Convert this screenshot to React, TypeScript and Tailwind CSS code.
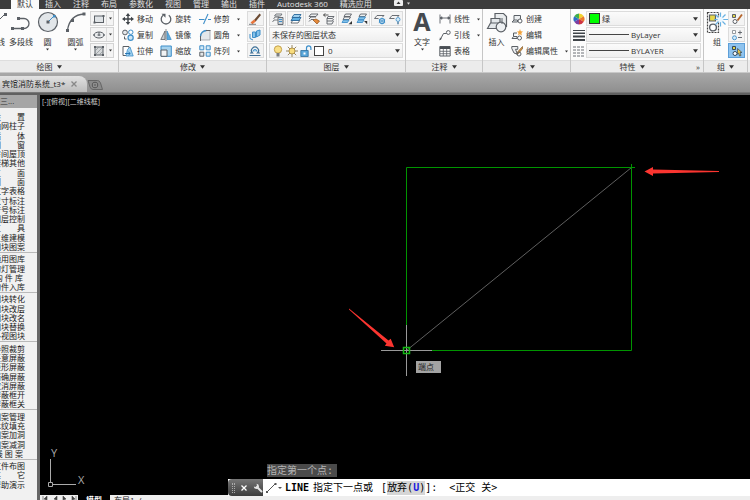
import React from 'react';
import clsx from 'clsx';

const tabs = ['默认', '插入', '注释', '布局', '参数化', '视图', '管理', '输出', '插件', 'Autodesk 360', '精选应用'];

const menuGroups = [
  ['设　　置', '轴网柱子', '墙　　体', '门　　窗', '房间屋顶', '楼梯其他', '立　　面', '剖　　面', '文字表格', '尺寸标注', '符号标注', '图层控制', '工　　具', '三维建模', '图块图案'],
  ['通用图库', '幻灯管理', '构 件 库 ', '构件入库'],
  ['图块转化', '图块改层', '图块改名', '图块替换', '多视图块'],
  ['参照裁剪', '任意屏蔽', '矩形屏蔽', '精确屏蔽', '取消屏蔽', '屏蔽框开', '屏蔽框关'],
  ['图案管理', '木纹填充', '图案加洞', '图案减洞', '线 图 案 '],
  ['文件布图', '其　　它', '帮助演示'],
];

const G = '#5b6066';
const B = '#3f8fc9';

// 12x12 icons of the ribbon
const icons: Record<string, React.ReactNode> = {
  rect: (
    <>
      <rect x="1.5" y="3" width="9" height="6.5" fill="#dfe3e6" stroke={G} />
      <path d="M0.5 8.5h2v2h-2zM9.5 2h2v2h-2z" fill={G} />
    </>
  ),
  ellipse: (
    <>
      <ellipse cx="6" cy="6" rx="5" ry="3" fill="#e8eaec" stroke={G} />
      <path d="M6 3v4M4.5 6h3M0 6h2M10 6h2" stroke={G} />
    </>
  ),
  hatch: (
    <>
      <rect x="2" y="2" width="8" height="8" fill="#d5d8da" stroke={G} />
      <path d="M2 6l4-4M2 10l8-8M6 10l4-4" stroke="#8b9094" strokeWidth=".7" />
      <path d="M1 1h2v2H1zM9 1h2v2H9zM1 9h2v2H1zM9 9h2v2H9z" fill={G} />
    </>
  ),
  move: <path d="M6 0l2.3 3H6.7v2.3H9V3.8L12 6 9 8.2V6.7H6.7V9h1.6L6 12 3.7 9h1.6V6.7H3v1.5L0 6l3-2.2v1.5h2.3V3H3.7z" fill="#3f4449" />,
  rotate: (
    <>
      <path d="M3.2 2.3a4.8 4.8 0 1 0 5.6 0" fill="none" stroke={G} strokeWidth="1.3" />
      <path d="M1.5.8h4v4z" fill={G} />
    </>
  ),
  trim: (
    <>
      <path d="M0 6.5h5.5M9 6.5h3" stroke={B} strokeWidth="1.2" />
      <path d="M4.5 11L9 1" stroke={B} strokeWidth="1.1" />
    </>
  ),
  copy: (
    <>
      <circle cx="3" cy="3.5" r="2.4" fill="#e4e7ea" stroke={G} />
      <circle cx="8.8" cy="3.2" r="2.2" fill="#fff" stroke={B} />
      <circle cx="8.6" cy="8.8" r="2.6" fill="#cfe6f5" stroke={B} strokeWidth="1.2" />
      <path d="M2.5 7.5v2.5h2" fill="none" stroke={G} />
    </>
  ),
  mirror: (
    <>
      <path d="M5 2v8.5H.8z" fill="#c9cdd1" stroke={G} strokeWidth=".8" />
      <path d="M7 2v8.5h4.2z" fill="#5caadd" stroke={B} strokeWidth=".8" />
      <path d="M6 0v12" stroke={G} strokeWidth=".7" />
    </>
  ),
  fillet: (
    <>
      <path d="M1.5 11V7.5a6 6 0 0 1 6-6H11V11z" fill="#e3e7ea" stroke="#9aa0a5" strokeWidth=".8" />
      <path d="M1.5 7.5a6 6 0 0 1 6-6" fill="none" stroke={B} strokeWidth="1.4" />
      <path d="M1.5 7v5M7 1.5h4.5" stroke={G} />
    </>
  ),
  stretch: (
    <>
      <path d="M1 1.5h6v9H1z" fill="#fff" stroke={G} />
      <path d="M5.5 4.5L8 2l3.2 9H4z" fill="#9fd0ee" stroke={B} strokeWidth=".8" />
      <path d="M3 8.5h5M6.5 7l1.8 1.5L6.5 10" fill="none" stroke="#1e6fb0" strokeWidth=".9" />
    </>
  ),
  scale: (
    <>
      <path d="M1 1h10.3v10.3H1z" fill="#a7d3ee" stroke={B} />
      <path d="M1 5h6v6.3H1z" fill="#f1f3f4" stroke={G} />
    </>
  ),
  array: (
    <>
      <path d="M.8.8h4v4h-4zM7.200.8h4v4h-4z" fill="#d6eaf7" stroke={B} />
      <path d="M.8 7.200h4v4h-4z" fill="#e4e7ea" stroke={G} />
      <path d="M7.200 7.200h4v4h-4z" fill="#d6eaf7" stroke={B} />
    </>
  ),
  erase: (
    <>
      <path d="M10.5 0.5L5 7l1.7 1.4L12 2z" fill="#6b4a32" />
      <path d="M5 6.5L1.5 9.5l2 1.7L7 8.2z" fill="#e9763d" />
      <path d="M0 11.3h7" stroke={G} strokeWidth=".8" />
    </>
  ),
  explode: (
    <>
      <path d="M3.5 3h3v5.500h-3zM7.500 2l3.500-1v5l-3.500 2z" fill="#86c1e8" stroke={B} />
      <path d="M1 5v4.500l3 1.500" fill="none" stroke={B} />
    </>
  ),
  offset: (
    <>
      <path d="M.5 10.500h11M1 8h2.500a3.500 3.500 0 1 1 5 0H11" fill="none" stroke="#3d6f96" strokeWidth="1.2" />
      <path d="M4 6.500a2 2 0 1 1 4 0" fill="#9fd0ee" stroke={B} />
    </>
  ),
  layerProps: (
    <>
      <path d="M2.500 3l1.500-2h6L8.500 3zM1.500 6L3 4h4M.5 9L2 7h4" fill="#eef0f1" stroke={G} strokeWidth=".8" />
      <path d="M6 4.500h5v7H6z" fill="#cfd6dc" stroke={G} strokeWidth=".9" />
      <path d="M7 6.500h3M7 8.500h3" stroke={B} />
    </>
  ),
  layerStack: (
    <>
      <path d="M1 10l2-3h7l-2 3z" fill="#fff" stroke={G} strokeWidth=".9" />
      <path d="M1 7.500l2-3h8l-2 3z" fill="#5fb0e3" stroke="#27679a" strokeWidth=".9" />
      <path d="M2 4.500l2-3h7l-2 3z" fill="#9fd0ee" stroke="#27679a" strokeWidth=".9" />
    </>
  ),
  layerMatch: (
    <>
      <path d="M1 3.500l2-2.500h7L8 3.500zM1 6l2-2h5M1 8.500l2-2h3" fill="#eef0f1" stroke={G} strokeWidth=".9" />
      <path d="M5 7l4 4 2.500-3L8 6z" fill="#e58a3a" stroke="#8c4d1a" strokeWidth=".7" />
    </>
  ),
  layerPrev: (
    <>
      <path d="M5 3.500h6L9.500 5.500H4zM4 8h5.500l1-2M4 5.500v5.500h5l1.500-3" fill="#eef0f1" stroke={G} strokeWidth=".9" />
      <path d="M.5 2h5M2.500.3l-2 1.700 2 1.700" fill="none" stroke="#444" strokeWidth=".9" />
    </>
  ),
  layerDown: (
    <>
      <path d="M3 3.500l1.500-2.500h6L9 3.500zM2 6.500L3.500 4h6L8 6.500z" fill="#eef0f1" stroke={G} strokeWidth=".9" />
      <path d="M1 9.500L2.500 7H8L6.500 9.500z" fill="#84c1e8" stroke={B} strokeWidth=".9" />
      <path d="M11 8v3.200H7.500z" fill="#333" />
    </>
  ),
  layerUp: (
    <>
      <path d="M3 3.500l1.500-2.500h6L9 3.500z" fill="#eef0f1" stroke={G} strokeWidth=".9" />
      <path d="M2 6.500L3.500 4h6L8 6.500zM1 9.500L2.500 7H8L6.500 9.500z" fill="#84c1e8" stroke={B} strokeWidth=".9" />
      <path d="M8 8h3.200v3.200z" fill="#333" />
    </>
  ),
  layerFreeze: (
    <>
      <path d="M.5 5.500L3 2.500h7L8.500 4M.5 5.500h4" fill="none" stroke={G} strokeWidth=".9" />
      <circle cx="8" cy="8" r="2.500" fill="#fff" stroke={B} strokeWidth="1.200" />
      <path d="M8 4.500v7M4.800 6.300l6.400 3.400M4.800 9.700l6.400-3.400" stroke={B} strokeWidth=".7" />
    </>
  ),
  layerOff: (
    <>
      <path d="M.5 5.500L3 2.500h7L8.500 4M.5 5.500h5" fill="none" stroke={G} strokeWidth=".9" />
      <circle cx="9" cy="6.500" r="2" fill="#d6ecfa" stroke={B} strokeWidth=".8" />
      <path d="M8.200 8.800h1.600v2.400H8.200z" fill="#5a86a8" />
    </>
  ),
  linear: <path d="M1 1.500v9M11 1.500v9M1 5h10M1 5l2-1.200v2.400zM11 5l-2-1.200v2.400z" fill={G} stroke={G} strokeWidth=".9" />,
  leader: (
    <>
      <path d="M1 11l3.500-6.500h3" fill="none" stroke={G} />
      <path d="M.5 11.500l.4-3 2 1.200z" fill={G} />
      <circle cx="9.300" cy="3.500" r="1.900" fill="#fff" stroke={G} />
    </>
  ),
  table: (
    <>
      <path d="M.8 1.500h10.400v9.500H.8z" fill="#fff" stroke={G} />
      <path d="M1 1.500h10v2.500H1z" fill="#4a4f55" />
      <path d="M1 6.300h10M1 8.700h10M4.300 4v7M7.700 4v7" stroke={G} strokeWidth=".8" />
    </>
  ),
  create: (
    <>
      <path d="M3 7V2.500h6.500V6M1 9l2-2h3.500v2z" fill="#edf0f2" stroke={G} />
      <circle cx="9" cy="8" r="2" fill="#fff" stroke={G} />
    </>
  ),
  edit: (
    <>
      <path d="M2.500 7.500V4H6M1 9.500l1.500-2H6v2z" fill="#edf0f2" stroke={G} />
      <circle cx="8.500" cy="9" r="2" fill="#fff" stroke={G} />
      <path d="M9 0l.8 2.200 2.200.3-1.600 1.500.4 2.400L9 5.200 7 6.300l.5-2.200L6 2.600l2.200-.3z" fill="#f2a33c" />
    </>
  ),
  editAttr: (
    <>
      <path d="M.8 1.500h6v2.800H4.500l2 5L3 8 .8 3.500z" fill="#eceef0" stroke={G} />
      <path d="M11.500 1.500L6.500 7l-.7 2 2-.7L12 3z" fill="#d99a45" stroke="#674420" strokeWidth=".6" />
      <circle cx="8" cy="9" r="2" fill="none" stroke={G} />
    </>
  ),
  colors: (
    <>
      <path d="M6 6V.5A5.500 5.500 0 0 1 10.800 3.300z" fill="#f2d32f" />
      <path d="M6 6l4.800-2.700a5.500 5.500 0 0 1 0 5.500z" fill="#e97b2c" />
      <path d="M6 6l4.800 2.800A5.500 5.500 0 0 1 6 11.500z" fill="#cf3341" />
      <path d="M6 6v5.500A5.500 5.500 0 0 1 1.200 8.800z" fill="#7c3fa0" />
      <path d="M6 6L1.200 8.800a5.500 5.500 0 0 1 0-5.500z" fill="#2e6fc4" />
      <path d="M6 6L1.200 3.300A5.500 5.500 0 0 1 6 .5z" fill="#3fae4c" />
    </>
  ),
  weights: <path d="M0 1h12v1H0zM0 3.500h12V5H0zM0 6.500h12v2H0zM0 10h12v2H0z" fill="#3f4449" />,
  dashes: <path d="M0 2h12M0 5h12M0 8h12M0 11h12" stroke={G} strokeDasharray="3 1" strokeWidth=".9" />,
  ungroup: (
    <>
      <path d="M1.500 1.500h3v3h-3z" fill="#e3d44a" stroke={G} />
      <circle cx="4" cy="8.500" r="2" fill="#fff" stroke={G} />
      <path d="M11 1.500L6.500 7.500" stroke="#b5652c" strokeWidth="1.800" />
    </>
  ),
  groupEdit: (
    <>
      <path d="M1.500 1.500h3v3h-3z" fill="#fff" stroke="#8b9094" strokeWidth=".9" />
      <circle cx="3.500" cy="8.800" r="2" fill="#d6eaf7" stroke={B} strokeWidth=".9" />
      <path d="M7 3.500h4M9 1.500v4M7 8.500h4" stroke={G} strokeWidth=".9" />
    </>
  ),
  groupSelect: (
    <>
      <path d="M1.500 1.500h3v3h-3z" fill="#e3d44a" stroke="#34495c" />
      <circle cx="4" cy="8.500" r="2" fill="#fff" stroke="#34495c" />
      <path d="M6.500 3.500l4.500 4H9l1 3-1.500.5-.8-2.800-1.200 1z" fill="#e9c64a" stroke="#34495c" strokeWidth=".7" />
    </>
  ),
  bulb: (
    <>
      <circle cx="6" cy="4.500" r="3.700" fill="#f9df86" stroke="#b58f3a" strokeWidth=".8" />
      <path d="M4.500 8h3v3.500h-3z" fill="#7a7d80" />
    </>
  ),
  sun: (
    <>
      <path d="M6 0v12M0 6h12M1.800 1.800l8.400 8.400M10.200 1.800l-8.400 8.400" stroke="#8d7b4e" strokeWidth=".9" />
      <circle cx="6" cy="6" r="3" fill="#f8dc7d" stroke="#a5853a" strokeWidth=".8" />
    </>
  ),
  unlock: (
    <>
      <path d="M6.500 6V3a2.200 2.200 0 0 1 4.400 0v2" fill="none" stroke={B} strokeWidth="1.200" />
      <path d="M.8 5.500h7.400v6H.8z" fill="#5aa7da" stroke="#2d6d9c" strokeWidth=".8" />
      <path d="M3.500 7.500h2v2h-2z" fill="#fff" />
    </>
  ),
};

const Icon = ({ name }: { name: string }) => (
  <svg viewBox="0 0 12 12" className="size-3 shrink-0">{icons[name]}</svg>
);

const Caret = ({ big }: { big?: boolean }) => (
  <svg viewBox="0 0 6 4" className={clsx('shrink-0', big ? 'w-[5px] h-[4px]' : 'w-[3px] h-[3px]')}>
    <path d="M0 0h6L3 4z" fill="#333" />
  </svg>
);

const Panel = ({ title, className, launcher, children }: { title: string; className: string; launcher?: boolean; children: React.ReactNode }) => (
  <section className={clsx('shrink-0 flex flex-col border-r border-[#c6c6c6]', className)}>
    <div className="h-[52px] flex items-start px-0.5 pt-0.5">{children}</div>
    <div className="h-3 flex items-center bg-[#ececec] border-t border-[#dedede]">
      <button className="flex-1 flex items-center justify-center gap-1">
        <span>{title}</span>
        <Caret big />
      </button>
      {launcher && <button aria-label="特性选项板" className="w-2.5">»</button>}
    </div>
  </section>
);

const Tool = ({ icon, label, caret }: { icon: string; label: string; caret?: boolean }) => (
  <button className="h-4 flex items-center gap-[3px] whitespace-nowrap">
    <Icon name={icon} />
    <span>{label}</span>
    {caret && <span className="pl-1"><Caret /></span>}
  </button>
);

const BigTool = ({ label, caret, className, children }: { label: string; caret?: boolean; className: string; children: React.ReactNode }) => (
  <button className={clsx('flex flex-col items-center shrink-0 whitespace-nowrap', className)}>
    <svg viewBox="0 0 22 22" className="size-[22px] mb-1">{children}</svg>
    <span className="leading-[10px]">{label}</span>
    {caret && <span className="pt-px"><Caret /></span>}
  </button>
);

const IconBox = ({ names, active }: { names: string[]; active?: boolean }) => (
  <div className={clsx('h-[15px] flex items-center border', active ? 'bg-[#8fc3ee] border-[#5d9fd8]' : 'bg-[#f4f4f4] border-[#dcdcdc]')}>
    {names.map((n) => (
      <button key={n} aria-label={n} className="w-[15px] h-full flex items-center justify-center"><Icon name={n} /></button>
    ))}
  </div>
);

const SplitBox = ({ name }: { name: string }) => (
  <div className="h-[15px] flex border border-[#d4d4d4] bg-[#f4f4f4]">
    <button aria-label={name} className="w-[15px] flex items-center justify-center"><Icon name={name} /></button>
    <button aria-label={name + ' 选项'} className="w-[7px] flex items-center justify-center border-l border-[#dcdcdc]"><Caret /></button>
  </div>
);

const Combo = ({ label, value, children }: { label: string; value: string; children?: React.ReactNode }) => (
  <div className="h-[15px] flex-1 min-w-0 flex items-center gap-0.5 px-0.5 border border-[#dcdcdc] bg-linear-to-b from-[#fbfbfb] to-[#efefef]">
    {children}
    <select aria-label={label} className="appearance-none bg-transparent flex-1 min-w-0 h-3 leading-3 outline-none">
      <option>{value}</option>
    </select>
    <Caret big />
  </div>
);

const Ribbon = () => (
  <div className="flex h-16 shrink-0 bg-[#fcfcfc] overflow-hidden border-b border-[#c8c8c8]">
    <Panel title="绘图" className="w-[139px] -ml-5">
      <div className="flex flex-1 min-w-0 justify-end">
        <BigTool label="直线" className="w-[22px]">
          <path d="M4 18L19 3" stroke={G} />
          <path d="M18 2h3v3h-3z" fill={G} />
        </BigTool>
        <BigTool label="多段线" className="w-[26px]">
          <path d="M2 17.500h12a4.500 4.500 0 0 0 0-10H8" fill="none" stroke={G} strokeWidth="1.300" />
          <path d="M1 16h3v3H1zM11 16h3v3h-3zM7 6h3v3H7z" fill={G} />
        </BigTool>
        <BigTool label="圆" caret className="w-[27px]">
          <circle cx="11" cy="11" r="9.500" fill="#e2e6e9" stroke={G} strokeWidth="1.200" />
          <path d="M11 11l6-6" stroke={B} />
          <path d="M9.500 9.500h3v3h-3z" fill={G} />
          <path d="M16 4h2.500v2.500H16z" fill={B} />
        </BigTool>
        <BigTool label="圆弧" caret className="w-[29px]">
          <path d="M2.500 19C4 10 9 3.500 19 3" fill="none" stroke={G} strokeWidth="1.300" />
          <path d="M1 18h3v3H1zM6 8h3v3H6zM17.500 1.500h3v3h-3z" fill={G} />
        </BigTool>
        <div className="flex flex-col gap-px pr-0.5">
          <SplitBox name="rect" />
          <SplitBox name="ellipse" />
          <SplitBox name="hatch" />
        </div>
      </div>
    </Panel>

    <Panel title="修改" className="w-[148px]">
      <div className="flex flex-1 justify-between pl-px">
        <div>
          <Tool icon="move" label="移动" />
          <Tool icon="copy" label="复制" />
          <Tool icon="stretch" label="拉伸" />
        </div>
        <div>
          <Tool icon="rotate" label="旋转" />
          <Tool icon="mirror" label="镜像" />
          <Tool icon="scale" label="缩放" />
        </div>
        <div>
          <Tool icon="trim" label="修剪" caret />
          <Tool icon="fillet" label="圆角" caret />
          <Tool icon="array" label="阵列" caret />
        </div>
        <div className="flex flex-col gap-px">
          <IconBox names={['erase']} />
          <IconBox names={['explode']} />
          <IconBox names={['offset']} />
        </div>
      </div>
    </Panel>

    <Panel title="图层" className="w-[139px]">
      <div className="flex-1 min-w-0 flex flex-col gap-px">
        <div className="flex justify-between">
          <IconBox names={['layerProps']} />
          <IconBox names={['layerStack']} />
          <IconBox names={['layerMatch', 'layerPrev']} />
          <IconBox names={['layerDown', 'layerUp']} />
          <IconBox names={['layerFreeze', 'layerOff']} />
        </div>
        <div className="flex"><Combo label="图层状态" value="未保存的图层状态" /></div>
        <div className="flex">
          <Combo label="图层" value="0">
            <Icon name="bulb" />
            <Icon name="sun" />
            <Icon name="unlock" />
            <span className="size-2.5 mr-0.5 shrink-0 border border-[#444] bg-white" />
          </Combo>
        </div>
      </div>
    </Panel>

    <Panel title="注释" className="w-[77px]">
      <BigTool label="文字" caret className="w-[28px]">
        <text x="11" y="20" textAnchor="middle" fontSize="25" fontWeight="bold" fontFamily="Noto Sans, sans-serif" fill="#454a50">A</text>
      </BigTool>
      <div className="pl-[3px]">
        <Tool icon="linear" label="线性" caret />
        <Tool icon="leader" label="引线" caret />
        <Tool icon="table" label="表格" />
      </div>
    </Panel>

    <Panel title="块" className="w-[88px]">
      <BigTool label="插入" className="w-[23px]">
        <path d="M9 8V2.500h8.500l3 3V16" fill="#e8ebed" stroke={G} strokeWidth="1.200" />
        <path d="M5 12V7.500h9V12M1.500 17.500l3-5.500H14v5.500z" fill="#e3e7ea" stroke={G} strokeWidth="1.200" />
        <circle cx="15" cy="16" r="4.800" fill="#edf0f2" stroke={G} strokeWidth="1.200" />
        <path d="M16 7v6" stroke={G} />
      </BigTool>
      <div className="pl-[3px]">
        <Tool icon="create" label="创建" />
        <Tool icon="edit" label="编辑" />
        <Tool icon="editAttr" label="编辑属性" caret />
      </div>
    </Panel>

    <Panel title="特性" launcher className="w-[133px]">
      <div className="flex-1 min-w-0 flex flex-col gap-px">
        <div className="flex items-center gap-px">
          <Icon name="colors" />
          <Combo label="对象颜色" value="绿"><span className="size-[11px] shrink-0 bg-[#00ff00] border border-[#333]" /></Combo>
        </div>
        <div className="flex items-center gap-px">
          <Icon name="weights" />
          <Combo label="线宽" value="ByLayer"><span className="w-10 shrink-0 border-t border-[#444]" /></Combo>
        </div>
        <div className="flex items-center gap-px">
          <Icon name="dashes" />
          <Combo label="线型" value="BYLAYER"><span className="w-10 shrink-0 border-t border-[#444]" /></Combo>
        </div>
      </div>
    </Panel>

    <Panel title="组" className="w-[44px]">
      <div className="flex flex-1 justify-between">
        <BigTool label="组" className="w-[22px]">
          <path d="M1.500 1.500h11v20h-11z" fill="none" stroke="#444" strokeWidth="1.200" strokeDasharray="2 1" />
          <path d="M3.500 4h6v6h-6z" fill="#e6d84a" stroke={G} strokeWidth="1.200" />
          <circle cx="7" cy="16.500" r="3.400" fill="#fff" stroke={G} strokeWidth="1.400" />
          <path d="M14.500 1.500v14M8 8.500h14M9.500 3.500l10 10M19.500 3.500l-10 10" stroke="#67b1e2" strokeWidth="1.200" />
          <circle cx="14.500" cy="8.500" r="2.800" fill="#eaf6ff" />
        </BigTool>
        <div className="flex flex-col gap-px">
          <IconBox names={['ungroup']} />
          <IconBox names={['groupEdit']} />
          <IconBox names={['groupSelect']} active />
        </div>
      </div>
    </Panel>
    <div className="flex-1 flex flex-col justify-end"><div className="h-3 bg-[#ececec]" /></div>
  </div>
);

const Sidebar = () => (
  <aside className="w-10 shrink-0 flex flex-col border-r-3 border-[#666] bg-[#f1f1f1] overflow-hidden">
    <div className="h-[13px] shrink-0 bg-[#a6a6a6] text-[#333] leading-3 whitespace-nowrap">三...</div>
    <nav className="flex-1 flex flex-col justify-between pt-1 pb-2.5 text-[#222]">
      {menuGroups.map((group) =>
        group.map((item, i) => (
          <button
            key={item}
            className={clsx(
              'leading-[9px] flex justify-end pr-3 whitespace-pre',
              i === group.length - 1 && 'border-b border-[#b9b9b9] pb-px mb-px last:border-transparent last:pb-0 last:mb-0'
            )}
          >
            {item}
          </button>
        ))
      )}
    </nav>
  </aside>
);

const Drawing = () => (
  <svg className="absolute inset-0 w-full h-full" fill="none">
    {/* rectangle with its diagonal rubber band */}
    <path d="M366.500 72.500h225v183h-225z" stroke="#009400" />
    <path d="M366.500 255.500L591.500 72.500" stroke="#6a6a6a" strokeWidth=".9" />
    <path d="M591.500 69v6M589 72.500h6" stroke="#009400" />

    {/* crosshair */}
    <path d="M341 255.500h51M366.500 230v51" stroke="#999" />
    <path d="M363.500 252.500h6v6h-6z" stroke="#12b812" strokeWidth="1.500" />

    <path d="M309 213.500L348.500 245.500 350.700 243.800 354.200 252.300 344.800 250.800 346.500 248.500 309 214.500z" fill="#fb3530" />
    <path d="M604.500 76.500L613 72v2.500L679 76v1L613 78.500V81z" fill="#fb3530" />

    {/* ucs icon */}
    <path d="M10.500 387V364M13 389.500h23M8.500 387.500h4v4h-4z" stroke="#aaa" />
    <g fill="#aaa" fontFamily="Open Sans, sans-serif" fontSize="11">
      <text x="11" y="362">Y</text>
      <text x="38" y="389">X</text>
    </g>
  </svg>
);

const CommandLine = () => (
  <div className="absolute left-[188px] right-0 bottom-[4px] text-[10px] font-[DejaVu_Sans_Mono,Noto_Sans_CJK_SC,monospace]">
    <div className="ml-[39px] mb-0.5 pr-1 w-fit leading-[13px] bg-[#4a4a4a] text-[#b5b5b5]">指定第一个点:</div>
    <div className="h-[17px] flex items-center bg-white text-black whitespace-pre">
      <div className="w-[35px] h-full flex items-center gap-1.5 pl-1 bg-linear-to-b from-[#777] to-[#3c3c3c] rounded-l-sm">
        <span className="w-[3px] h-2.5 border-x border-dotted border-[#aaa]" />
        <button aria-label="关闭">
          <svg viewBox="0 0 6 6" className="size-1.5"><path d="M.5.5l5 5M5.500.5l-5 5" stroke="#fff" strokeWidth="1.300" /></svg>
        </button>
        <button aria-label="自定义">
          <svg viewBox="0 0 10 10" className="size-2.5">
            <path d="M4.500 4.500L8.500 8.500" stroke="#e4e4e4" strokeWidth="2" strokeLinecap="round" />
            <path d="M3.500 0.800L4 2.500 2.500 4 .8 3.500A2.600 2.600 0 1 0 3.500.8z" fill="#e4e4e4" />
          </svg>
        </button>
      </div>
      <svg viewBox="0 0 18 12" className="w-[18px] h-3 mx-0.5">
        <path d="M2 10L10 2" stroke="#555" />
        <path d="M1 9h2v2H1zM9.500 1h2v2h-2z" fill="#555" />
        <path d="M13 5h4l-2 2z" fill="#555" />
      </svg>
      <span className="font-bold">LINE</span>
      <span className="pl-1">指定下一点或</span>
      <span className="pl-2">[</span>
      <button className="bg-[#d6d6d6] leading-[14px]">放弃(<b className="text-[#1a1ae0]">U</b>)</button>
      <span>]:</span>
      <span>  &lt;正交 关&gt;</span>
      <input aria-label="命令" className="flex-1 min-w-0 h-full outline-none" />
    </div>
  </div>
);

export default function App() {
  return (
    <div className="h-screen flex flex-col overflow-hidden bg-[#6b6b6b] text-[8px] leading-[10px] text-[#333] font-[Open_Sans,Noto_Sans_CJK_SC,sans-serif]">
      <nav className="h-[9px] shrink-0 flex items-start pl-[11px] bg-[#3d3d3d] text-[#e0e0e0] whitespace-nowrap overflow-hidden">
        {tabs.map((tab, i) => (
          <button key={tab} className={clsx('h-[9px] px-1.5 leading-[7px] flex', i === 0 && 'bg-[#fafafa] text-[#333]')}>{tab}</button>
        ))}
        <button aria-label="最小化功能区" className="ml-4 flex items-center gap-1">
          <svg viewBox="0 0 9 6" className="w-[9px] h-1.5">
            <rect width="9" height="6" rx="1" fill="#eee" />
            <path d="M2.500 4h4l-2-2.500z" fill="#333" />
          </svg>
          <svg viewBox="0 0 4 3" className="w-[3px] h-[3px]"><path d="M0 0h4L2 3z" fill="#ddd" /></svg>
        </button>
      </nav>

      <Ribbon />

      <div className="h-[19px] shrink-0 flex items-end bg-linear-to-b from-[#a8a8a8] to-[#8f8f8f] text-[#222]">
        <div className="h-4 flex items-center pl-0.5 pr-2.5 gap-1.5 bg-linear-to-b from-[#e2e2e2] to-[#bdbdbd] rounded-tr-lg whitespace-nowrap">
          <span>宾馆消防系统_t3*</span>
          <button aria-label="关闭图形">
            <svg viewBox="0 0 6 6" className="size-1.5"><path d="M.5.5l5 5M5.500.5l-5 5" stroke="#888" strokeWidth="1.300" /></svg>
          </button>
        </div>
        <button aria-label="新建图形">
          <svg viewBox="0 0 16 14" className="w-4 h-[14px]">
            <path d="M1 2.500h9.500q2 0 3 2.500l2 6.500H6q-2 0-3-2.500z" fill="#8a8a8a" stroke="#666" />
            <circle cx="8" cy="7" r="2.800" fill="#a5a5a5" stroke="#555" />
            <path d="M8 5.300v3.400M6.300 7h3.400" stroke="#555" strokeWidth=".8" />
          </svg>
        </button>
      </div>
      <div className="h-[3px] shrink-0 bg-[#606060] border-t border-[#777]" />

      <div className="flex-1 min-h-0 flex">
        <Sidebar />
        <main className="relative flex-1 min-w-0 flex flex-col bg-black">
          <div className="relative flex-1">
            <Drawing />
            <div className="relative pl-0.5 pt-0.5 text-[7px] text-[#d0d0d0]">[-][俯视][二维线框]</div>
            <div className="absolute left-[376px] top-[266px] w-[25px] h-3 pl-0.5 leading-3 bg-[#a3a3a3] text-[#222]">端点</div>
          </div>
          <div className="h-[5px] shrink-0 flex items-start overflow-hidden bg-[#eee] leading-[9px] whitespace-nowrap text-[#222]">
            <svg viewBox="0 0 38 5" className="w-[38px] h-[5px] shrink-0">
              <path d="M3 1v4M7 1v4L4 4zM17 1v4l-3-1zM23 1v4l3-1zM32 1v4l3-1zM36 1v4" fill="#444" stroke="#444" strokeWidth=".6" />
            </svg>
            <button className="px-2 bg-black text-white font-bold leading-[9px]">模型</button>
            <button className="px-1 leading-[9px]">布局1</button>
            <span>/</span>
          </div>
          <CommandLine />
        </main>
      </div>
    </div>
  );
}
